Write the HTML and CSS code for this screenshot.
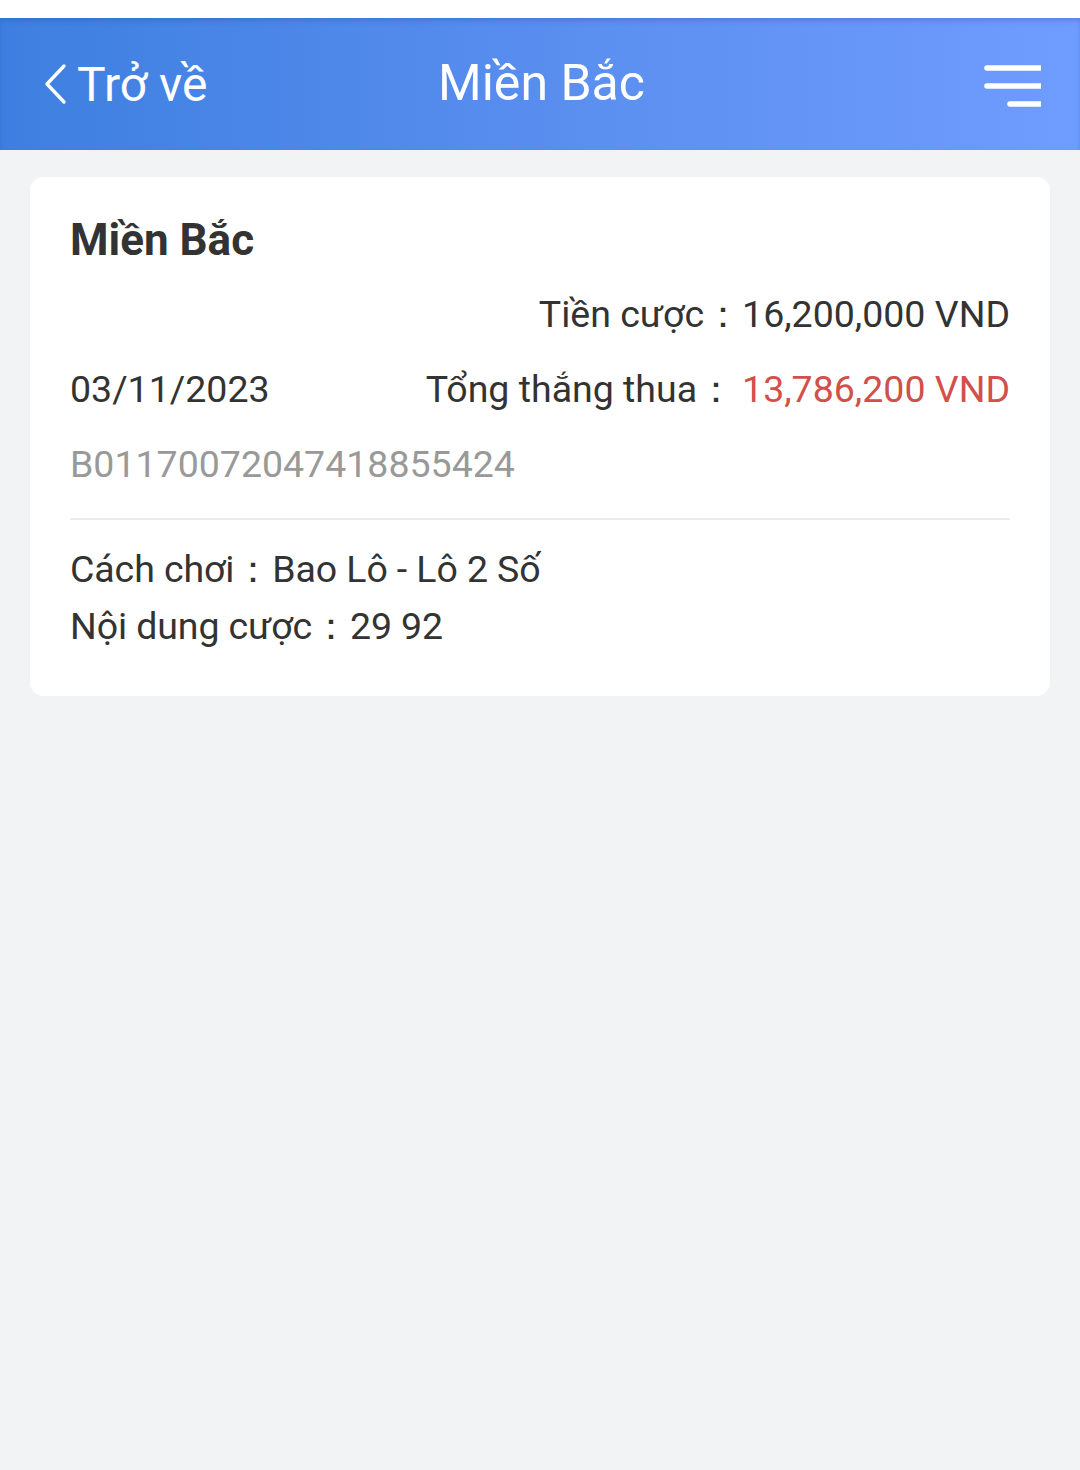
FILE: index.html
```html
<html>
<meta http-equiv="Content-Type" content="text/html; charset=utf-8" />

<head>
    <link rel="stylesheet" href="styles.css">
</head>

<body>
    <div class="statusbar"></div>
    <div class="header">
        <div class="back">
            <svg class="back-icon" width="26" height="42" viewBox="0 0 26 42">
                <path d="M22 3 L5 21 L22 39" fill="none" stroke="#fff" stroke-width="3.4" stroke-linecap="round" stroke-linejoin="round" />
            </svg>
            <span>Trở về</span>
        </div>
        <div class="title">Miền Bắc</div>
        <div class="menu">
            <svg width="57" height="42" viewBox="0 0 57 42">
                <path d="M3 3 H57 M3 21 H57 M26 39 H57" fill="none" stroke="#fff" stroke-width="5.6" stroke-linecap="round" />
            </svg>
        </div>
    </div>

    <div class="card">
        <div class="card-title">Miền Bắc</div>
        <div class="row row-right">
            <span>Tiền cược：16,200,000 VND</span>
        </div>
        <div class="row">
            <span>03/11/2023</span>
            <span>Tổng thắng thua：<em class="red">13,786,200 VND</em></span>
        </div>
        <div class="row grey">B01170072047418855424</div>
        <div class="line"></div>
        <div class="info">Cách chơi：Bao Lô - Lô 2 Số</div>
        <div class="info">Nội dung cược：29 92</div>
    </div>
</body>

</html>
```

FILE: styles.css
```css
body,
div {
    margin: 0px;
    padding: 0px;
}

body {
    background: #f2f3f5;
    font-family: Roboto, "Noto Sans", sans-serif;
    color: #333;
}

.statusbar {
    height: 18px;
    background: #fff;
}

.header {
    height: 132px;
    background: linear-gradient(to right, #3d7fe0, #5b8ff0 55%, #6f9cff);
    box-shadow: inset 0 3px 4px rgba(40, 70, 150, 0.25);
    display: flex;
    align-items: center;
    justify-content: space-between;
    padding: 0 39px 0 42px;
    color: #fff;
}

.back {
    display: flex;
    align-items: center;
    font-size: 48px;
    width: 240px;
}

.back-icon {
    margin-right: 9px;
}

.title {
    font-size: 50px;
    padding-bottom: 2px;
}

.menu {
    width: 240px;
    display: flex;
    justify-content: flex-end;
    padding-top: 4px;
}

.card {
    background: #fff;
    margin: 27px 30px;
    border-radius: 14px;
    padding: 33px 40px 41px 40px;
}

.card-title {
    font-size: 44px;
    font-weight: bold;
    line-height: 60px;
}

.row {
    font-size: 37.5px;
    line-height: 75px;
    display: flex;
    justify-content: space-between;
}

.row-right {
    justify-content: flex-end;
    margin-top: 7px;
}

.red {
    font-style: normal;
    color: #d24f4c;
    margin-left: 7px;
}

.grey {
    color: #999;
}

.line {
    height: 2px;
    background: #ebebeb;
    margin: 16px 0 21px 0;
}

.info {
    font-size: 37.5px;
    line-height: 57px;
    letter-spacing: -0.1px;
}
```
